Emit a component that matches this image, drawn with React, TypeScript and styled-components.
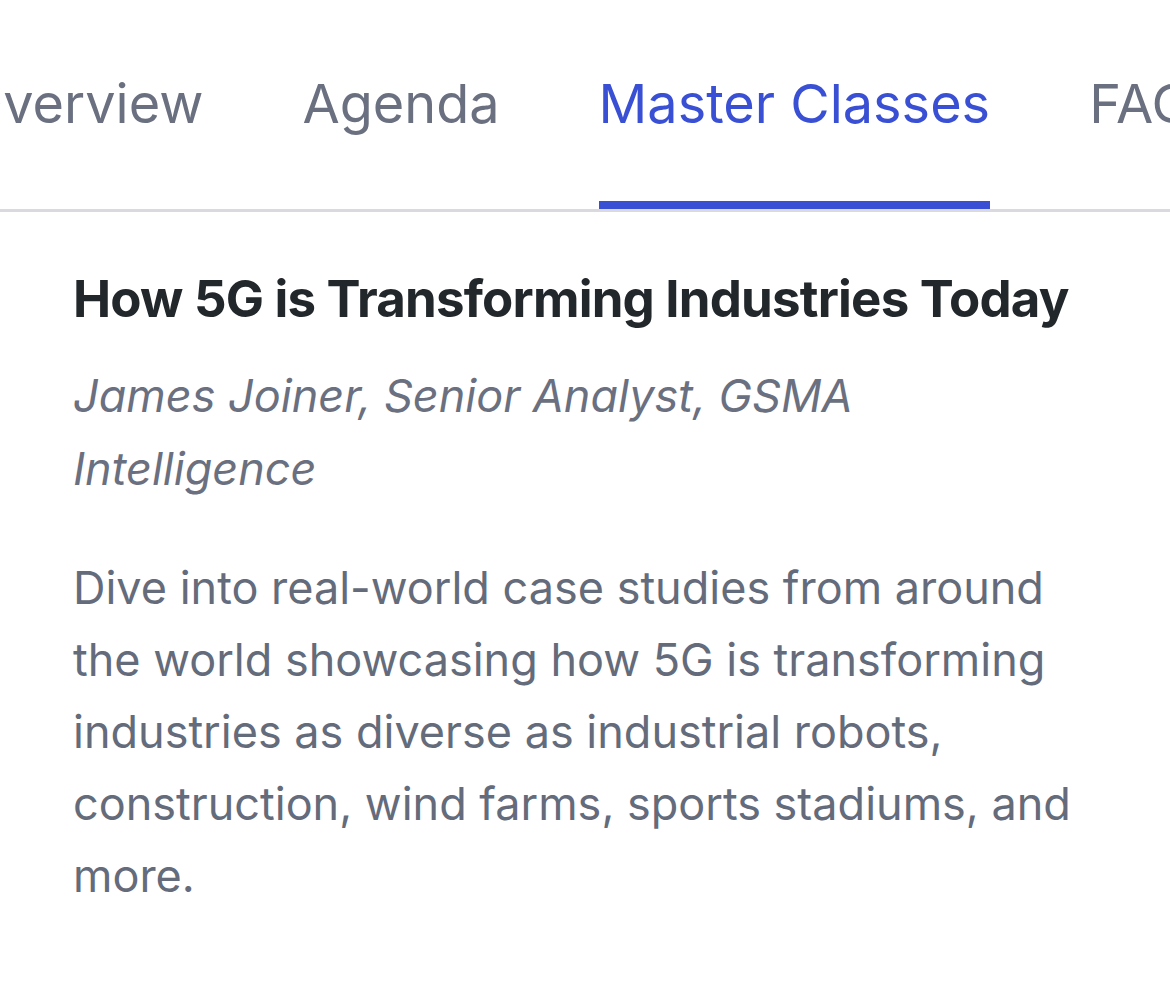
import React from "react";
import styled, { createGlobalStyle } from "styled-components";

const GlobalStyle = createGlobalStyle`
  html, body {
    margin: 0;
    padding: 0;
    background: #ffffff;
  }
  body {
    font-family: "Inter", "Noto Sans", sans-serif;
    -webkit-font-smoothing: antialiased;
  }
`;

const Page = styled.div`
  width: 1170px;
  min-height: 1001px;
  background: #fff;
  overflow: hidden;
`;

const TabBar = styled.nav`
  border-bottom: 3px solid #d9d9de;
  overflow: hidden;
`;

const TabList = styled.div`
  display: flex;
  gap: 99px;
  margin-left: -38px;
  white-space: nowrap;
`;

const Tab = styled.div<{ $active?: boolean }>`
  height: 209px;
  display: flex;
  align-items: flex-start;
  padding-top: 71px;
  box-sizing: border-box;
  font-size: 54px;
  font-weight: 400;
  color: ${({ $active }) => ($active ? "#3a50d4" : "#6a7080")};
  box-shadow: ${({ $active }) => ($active ? "inset 0 -8px 0 #3a50d4" : "none")};
  flex-shrink: 0;
`;

const Content = styled.section`
  padding: 51px 73px 0;
`;

const Title = styled.h2`
  margin: 0;
  font-size: 51px;
  font-weight: 700;
  line-height: 72px;
  color: #22272b;
  letter-spacing: -0.8px;
`;

const Speaker = styled.p`
  margin: 24px 0 0;
  font-size: 45px;
  font-style: italic;
  line-height: 73px;
  color: #6a7080;
  width: 860px;
`;

const Description = styled.p`
  margin: 47px 0 0;
  font-size: 45px;
  line-height: 72px;
  color: #646b7b;
`;

const tabs = ["Overview", "Agenda", "Master Classes", "FAQ"];

export default function App() {
  return (
    <Page>
      <GlobalStyle />
      <TabBar>
        <TabList>
          {tabs.map((t) => (
            <Tab key={t} $active={t === "Master Classes"}>
              {t}
            </Tab>
          ))}
        </TabList>
      </TabBar>
      <Content>
        <Title>How 5G is Transforming Industries Today</Title>
        <Speaker>James Joiner, Senior Analyst, GSMA Intelligence</Speaker>
        <Description>
          Dive into real-world case studies from around the world showcasing
          how 5G is transforming industries as diverse as industrial robots,
          construction, wind farms, sports stadiums, and more.
        </Description>
      </Content>
    </Page>
  );
}
